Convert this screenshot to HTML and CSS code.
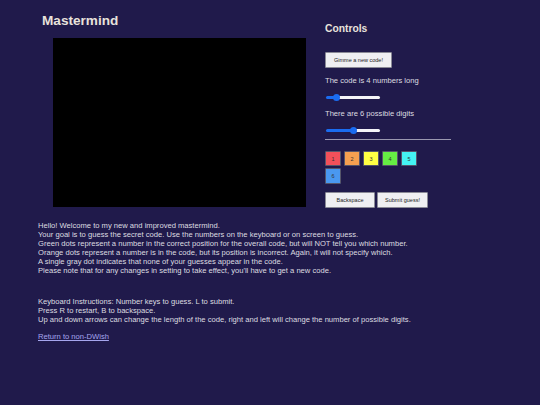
FILE: index.html
```html
<!DOCTYPE html>
<html>
<head>
<meta charset="utf-8">
<title>Mastermind</title>
<link rel="stylesheet" href="styles.css">
</head>
<body>
<div class="top">
  <div class="game">
    <h1 class="title">Mastermind</h1>
    <div class="board"></div>
  </div>
  <div class="controls">
    <h2 class="ctitle">Controls</h2>
    <button class="btn newcode">Gimme a new code!</button>
    <p class="label">The code is 4 numbers long</p>
    <input class="slider" type="range" min="1" max="20" value="4" style="--p:20%">
    <p class="label">There are 6 possible digits</p>
    <input class="slider" type="range" min="2" max="10" value="6" style="--p:50%">
    <hr class="rule">
    <div class="digits">
      <button class="digit d1">1</button>
      <button class="digit d2">2</button>
      <button class="digit d3">3</button>
      <button class="digit d4">4</button>
      <button class="digit d5">5</button>
      <button class="digit d6">6</button>
    </div>
    <div class="actions">
      <button class="btn action">Backspace</button>
      <button class="btn action">Submit guess!</button>
    </div>
  </div>
</div>
<div class="info">
  <p class="para">Hello! Welcome to my new and improved mastermind.<br>
  Your goal is to guess the secret code. Use the numbers on the keyboard or on screen to guess.<br>
  Green dots represent a number in the correct position for the overall code, but will NOT tell you which number.<br>
  Orange dots represent a number is in the code, but its position is incorrect. Again, it will not specify which.<br>
  A single gray dot indicates that none of your guesses appear in the code.<br>
  Please note that for any changes in setting to take effect, you'll have to get a new code.</p>
  <p class="para keys">Keyboard Instructions: Number keys to guess. L to submit.<br>
  Press R to restart, B to backspace.<br>
  Up and down arrows can change the length of the code, right and left will change the number of possible digits.</p>
  <p class="para"><a class="link" href="#">Return to non-DWish</a></p>
</div>
</body>
</html>
```
FILE: styles.css
```css
html, body {
  margin: 0;
  padding: 0;
  background: #201a4b;
  font-family: "Liberation Sans", Arial, sans-serif;
  color: #dddde0;
}
.top {
  display: flex;
}
.game {
  width: 283px;
  padding-left: 42px;
  box-sizing: content-box;
}
.title {
  margin: 0;
  padding-top: 13px;
  font-size: 13.6px;
  line-height: 16px;
  font-weight: bold;
  color: #e8e2dc;
}
.board {
  margin: 9px 0 0 11px;
  width: 253px;
  height: 169px;
  background: #000;
}
.controls {
  width: 126px;
}
.ctitle {
  margin: 23px 0 0 0;
  font-size: 10.3px;
  line-height: 12px;
  font-weight: bold;
  color: #e8e2dc;
}
.btn {
  font-family: "Liberation Sans", Arial, sans-serif;
  background: #efeff2;
  border: 1px solid #8a8a96;
  border-radius: 1px;
  color: #222;
  padding: 0;
  font-size: 5.5px;
}
.newcode {
  display: block;
  margin-top: 17px;
  width: 67px;
  height: 16px;
}
.label {
  margin: 8px 0 0 0;
  font-size: 7.6px;
  line-height: 9px;
}
.slider {
  -webkit-appearance: none;
  appearance: none;
  display: block;
  margin: 11px 0 0 1px;
  width: 54px;
  height: 3px;
  border-radius: 2px;
  background: linear-gradient(to right, #1a6cf0 var(--p), #f4f4f8 var(--p));
  outline: none;
}
.slider::-webkit-slider-thumb {
  -webkit-appearance: none;
  appearance: none;
  width: 7px;
  height: 7px;
  border-radius: 50%;
  background: #1a6cf0;
  border: none;
}
.slider + .label {
  margin-top: 10px;
}
.label + .slider + .label + .slider {
  margin-top: 11px;
}
.rule {
  margin: 7px 0 0 0;
  border: none;
  border-top: 1px solid #9a98b0;
  height: 0;
}
.digits {
  display: flex;
  flex-wrap: wrap;
  width: 96px;
  gap: 2px 3px;
  margin-top: 11px;
}
.digit {
  width: 16px;
  height: 15px;
  padding: 0;
  border: 1px solid #55556a;
  border-radius: 1px;
  font-family: "Liberation Sans", Arial, sans-serif;
  font-size: 5.5px;
  color: #333;
}
.d1 { background: #f2505a; }
.d2 { background: #f5a050; }
.d3 { background: #ffff44; }
.d4 { background: #66ee44; }
.d5 { background: #44f4f4; }
.d6 { background: #4a98f0; height: 16px; }
.actions {
  display: flex;
  gap: 2px;
  margin-top: 8px;
}
.action {
  width: 50px;
  height: 16px;
}
.action + .action {
  width: 51px;
}
.info {
  padding: 0 0 0 38px;
  margin-top: 13px;
}
.para {
  margin: 0;
  font-size: 7.6px;
  line-height: 9px;
}
.keys {
  margin-top: 22px;
}
.para + .para:last-child {
  margin-top: 8px;
}
.link {
  color: #a6a6ee;
}
```
